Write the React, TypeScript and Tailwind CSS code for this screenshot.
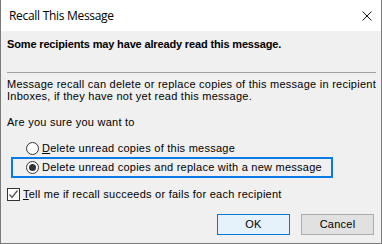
import React from "react";

const body = { fontFamily: '"Liberation Sans", Arial, sans-serif' };

export default function App() {
  return (
    <div className="w-[382px] h-[244px] bg-[#f0f0f0] border-l border-r border-b border-[#7a7a7a] flex flex-col text-black text-[11px] leading-[13px] tracking-[0.25px]" style={body}>
      <div className="h-[31px] shrink-0 bg-white flex items-center justify-between pl-[8px] pr-[9px]">
        <span className="text-[12px] tracking-[-0.3px]" style={{ fontFamily: '"Open Sans", "Noto Sans", sans-serif' }}>Recall This Message</span>
        <svg width="10" height="10" viewBox="0 0 10 10" className="block">
          <path d="M0.5 0.5 L9.5 9.5 M9.5 0.5 L0.5 9.5" stroke="#111" strokeWidth="1" />
        </svg>
      </div>
      <div className="pl-[6px] pr-[5px] flex flex-col">
        <div className="mt-[7px] h-[13px] font-bold whitespace-nowrap tracking-[-0.15px]">Some recipients may have already read this message.</div>
        <div className="mt-[21px] h-px bg-[#a0a0a0]" />
        <div className="mt-[5px] whitespace-nowrap">
          <div className="h-[12px]">Message recall can delete or replace copies of this message in recipient</div>
          <div className="h-[13px]">Inboxes, if they have not yet read this message.</div>
        </div>
        <div className="mt-[13px] h-[13px] whitespace-nowrap">Are you sure you want to</div>
        <div className="mt-[13px] h-[13px] flex items-center pl-[19px] whitespace-nowrap">
          <span className="w-[13px] h-[13px] rounded-full border border-[#333] bg-white shrink-0" />
          <span className="ml-[3px]"><span className="underline">D</span>elete unread copies of this message</span>
        </div>
        <div className="mt-[2px] ml-[4px] w-[322px] h-[21px] border-2 border-[#0a7ae6] flex items-center pl-[13px] whitespace-nowrap">
          <span className="w-[13px] h-[13px] rounded-full border border-[#333] bg-white shrink-0 flex items-center justify-center">
            <span className="w-[7px] h-[7px] rounded-full bg-[#333]" />
          </span>
          <span className="ml-[3px]">Delete unread copies and replace with a new message</span>
        </div>
        <div className="mt-[10px] h-[13px] flex items-center whitespace-nowrap">
          <span className="w-[13px] h-[13px] border border-[#333] bg-white shrink-0 flex items-center justify-center">
            <svg width="11" height="11" viewBox="0 0 11 11" className="block">
              <path d="M1.5 5.5 L4 8.5 L9.5 1.5" stroke="#555" strokeWidth="1.3" fill="none" />
            </svg>
          </span>
          <span className="ml-[3px]"><span className="underline">T</span>ell me if recall succeeds or fails for each recipient</span>
        </div>
        <div className="mt-[13px] flex justify-end pr-[2px] gap-[11px]">
          <button className="w-[73px] h-[21px] border border-[#0078d7] bg-[#e5f1fb] text-[11px] tracking-[0.25px]" style={body}>OK</button>
          <button className="w-[73px] h-[21px] border border-[#adadad] bg-[#e1e1e1] text-[11px] tracking-[0.25px]" style={body}>Cancel</button>
        </div>
      </div>
    </div>
  );
}
